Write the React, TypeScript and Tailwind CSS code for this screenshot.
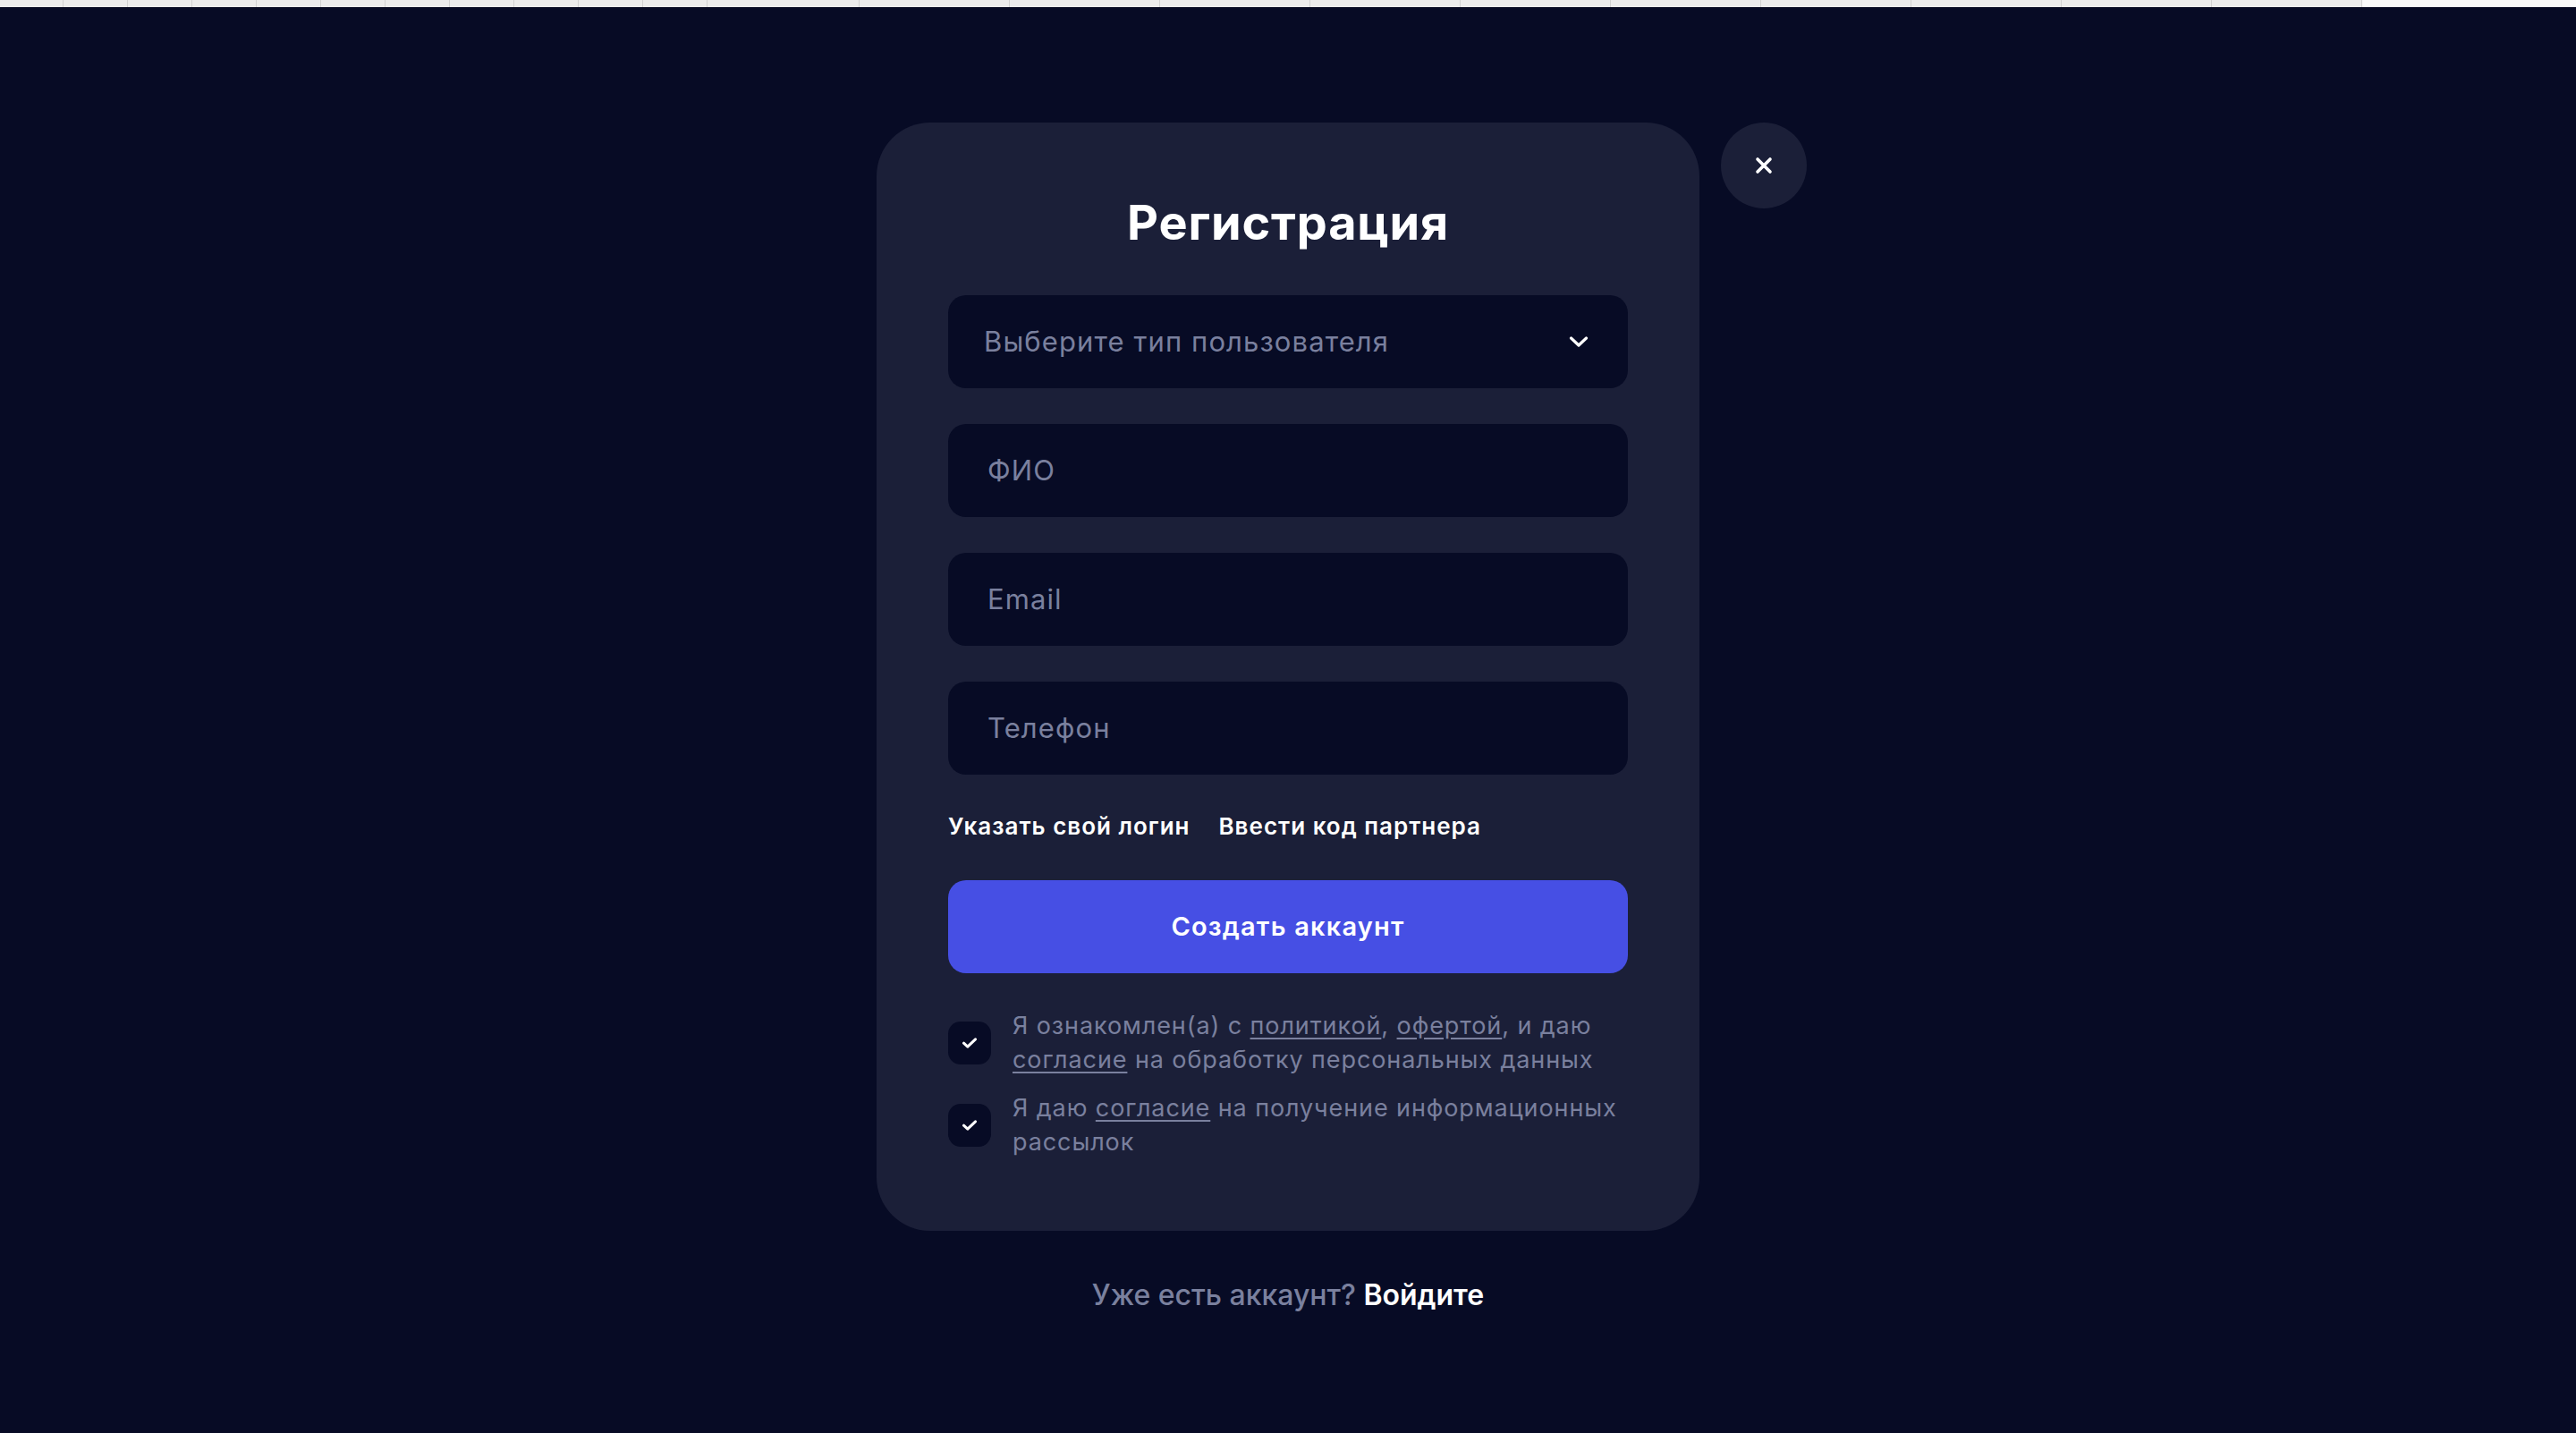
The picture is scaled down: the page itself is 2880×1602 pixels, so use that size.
import { useState } from "react";

const smallCells = [71, 72, 72, 72, 72, 72, 72, 72, 72, 72, 72];
const wideCells = [170, 168, 168, 168, 168, 168, 168, 168, 168, 168, 168];

function TopStrip() {
  return (
    <div className="box-content flex h-[8px] w-full border-b border-[#00031c] bg-[#ececec]">
      {smallCells.map((w, i) => (
        <div key={`s-${i}`} className="h-full border-r border-[#d2d2d2]" style={{ width: w }} />
      ))}
      {wideCells.map((w, i) => (
        <div key={`w-${i}`} className="h-full border-r border-[#d2d2d2]" style={{ width: w }} />
      ))}
      <div className="h-full flex-1 bg-[#fafafa]" />
    </div>
  );
}

function Field({ placeholder }: { placeholder: string }) {
  return (
    <div className="flex h-[104px] items-center rounded-[20px] bg-[#070b25] pl-[44px] pr-10">
      <span className="text-[31px] tracking-[1.1px] text-[#7a809e]">{placeholder}</span>
    </div>
  );
}

function CheckBox({ checked, onToggle }: { checked: boolean; onToggle: () => void }) {
  return (
    <button
      type="button"
      onClick={onToggle}
      className="flex size-12 shrink-0 items-center justify-center rounded-[14px] bg-[#070b25]"
      aria-pressed={checked}
    >
      {checked && (
        <svg width="16" height="12" viewBox="0 0 16 12" fill="none" aria-hidden>
          <path d="M1.5 6.2L5.8 10.2L14.5 1.8" stroke="#fff" strokeWidth="3" strokeLinecap="round" strokeLinejoin="round" />
        </svg>
      )}
    </button>
  );
}

export default function App() {
  const [agree, setAgree] = useState(true);
  const [news, setNews] = useState(true);

  return (
    <div className="min-h-[1602px] bg-[#070b25] font-['Inter',sans-serif]">
      <TopStrip />

      <div className="flex flex-col items-center pt-[128px]">
        <div className="relative w-[920px] rounded-[60px] bg-[#1b1f38] px-20 pb-20 pt-[85px]">
          {/* close */}
          <button
            type="button"
            className="absolute left-[calc(100%+24px)] top-0 flex size-24 items-center justify-center rounded-full bg-[#1b1f38]"
            aria-label="Закрыть"
          >
            <svg width="20" height="20" viewBox="0 0 20 20" fill="none" aria-hidden>
              <path d="M3 3L17 17M17 3L3 17" stroke="#fff" strokeWidth="3.6" strokeLinecap="round" />
            </svg>
          </button>

          <h1 className="text-center text-[54px] font-bold leading-none tracking-[0.8px] text-white">Регистрация</h1>

          <div className="mt-[54px] flex flex-col gap-10">
            <div className="flex h-[104px] items-center justify-between rounded-[20px] bg-[#070b25] pl-10 pr-[44px]">
              <span className="text-[31px] tracking-[1.1px] text-[#7a809e]">Выберите тип пользователя</span>
              <svg width="22" height="12" viewBox="0 0 22 12" fill="none" aria-hidden>
                <path d="M2.5 2L11 10L19.5 2" stroke="#fff" strokeWidth="3.2" strokeLinecap="round" strokeLinejoin="round" />
              </svg>
            </div>
            <Field placeholder="ФИО" />
            <Field placeholder="Email" />
            <Field placeholder="Телефон" />
          </div>

          <div className="mb-[47px] mt-[45px] flex gap-[32px] text-[26px] font-semibold leading-none tracking-[1px] text-white">
            <span>Указать свой логин</span>
            <span>Ввести код партнера</span>
          </div>

          <button
            type="button"
            className="flex h-[104px] w-full items-center justify-center rounded-[20px] bg-[#464fe4] text-[29px] font-semibold tracking-[1.2px] text-white"
          >
            Создать аккаунт
          </button>

          <div className="mt-10 flex flex-col gap-4 text-[27px] leading-[38px] tracking-[0.9px] text-[#7a809e]">
            <div className="flex items-center gap-6">
              <CheckBox checked={agree} onToggle={() => setAgree(!agree)} />
              <p className="whitespace-nowrap">
                Я ознакомлен(а) с <span className="underline underline-offset-4">политикой</span>,{" "}
                <span className="underline underline-offset-4">офертой</span>, и даю
                <br />
                <span className="underline underline-offset-4">согласие</span> на обработку персональных данных
              </p>
            </div>
            <div className="flex items-center gap-6">
              <CheckBox checked={news} onToggle={() => setNews(!news)} />
              <p className="whitespace-nowrap">
                Я даю <span className="underline underline-offset-4">согласие</span> на получение информационных
                <br />
                рассылок
              </p>
            </div>
          </div>
        </div>

        <p className="mt-[56px] text-[32px] font-medium leading-none text-[#7a809e]">
          Уже есть аккаунт? <span className="font-semibold text-white">Войдите</span>
        </p>
      </div>
    </div>
  );
}
